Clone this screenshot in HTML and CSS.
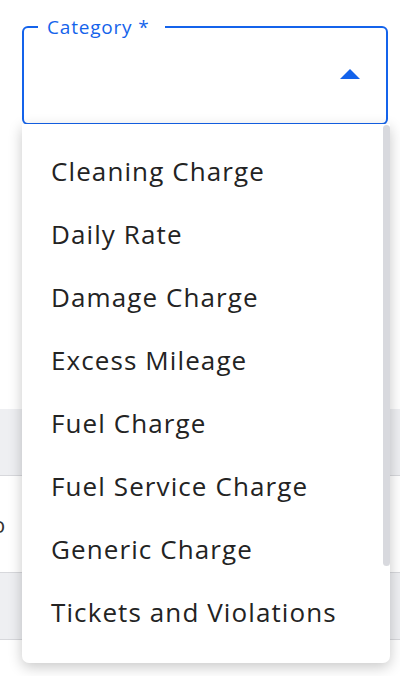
FILE: index.html
```html
<!DOCTYPE html>
<html lang="en">
<head>
    <meta charset="UTF-8">
    <title>Category</title>
    <link rel="stylesheet" href="styles.css">
</head>
<body>
    <div class="page">
        <fieldset class="field">
            <legend>Category *</legend>
            <div class="field-row">
                <svg class="arrow" width="20" height="10" viewBox="0 0 20 10">
                    <path d="M0 10 L10 0 L20 10 Z" fill="#1463eb"/>
                </svg>
            </div>
        </fieldset>

        <div class="table">
            <div class="row head"></div>
            <div class="row body"><span class="cut">o</span></div>
            <div class="row shade"></div>
            <div class="row"></div>
        </div>

        <div class="menu">
            <ul class="list">
                <li>Cleaning Charge</li>
                <li>Daily Rate</li>
                <li>Damage Charge</li>
                <li>Excess Mileage</li>
                <li>Fuel Charge</li>
                <li>Fuel Service Charge</li>
                <li>Generic Charge</li>
                <li>Tickets and Violations</li>
                <li>Tolls</li>
                <li>Weekly Rate</li>
            </ul>
            <div class="thumb"></div>
        </div>
    </div>
</body>
</html>
```

FILE: styles.css
```css
body {
    margin: 0;
    font-family: "Open Sans", sans-serif;
    background-color: #fff;
}

.page {
    position: relative;
    height: 676px;
    overflow: hidden;
    padding-top: 16px;
}

.field {
    margin: 0 12px 0 22px;
    padding: 0;
    border: 2px solid #1463eb;
    border-radius: 6px;
    height: 105px;
    box-sizing: content-box;
}

.field legend {
    margin-left: 14px;
    padding: 0 16px 0 9px;
    font-size: 19px;
    line-height: 22px;
    letter-spacing: 0.8px;
    color: #1463eb;
}

.field-row {
    display: flex;
    justify-content: flex-end;
    padding: 31px 26px 0 0;
}

.arrow {
    display: block;
}

.table {
    margin-top: 284px;
}

.row {
    height: 66px;
    border-bottom: 1px solid #d7d8dc;
}

.row.head,
.row.shade {
    background-color: #eeeff2;
}

.row.body {
    height: 96px;
    display: flex;
    align-items: center;
    background-color: #fff;
}

.cut {
    margin-left: -8px;
    font-size: 22px;
    color: #333;
}

.menu {
    position: absolute;
    top: 124px;
    left: 22px;
    width: 368px;
    height: 539px;
    background: #fff;
    border-radius: 0 0 7px 7px;
    box-shadow: 0 4px 14px rgba(0, 0, 0, 0.22);
    overflow: hidden;
}

.thumb {
    position: absolute;
    top: 1px;
    right: 0;
    width: 7px;
    height: 441px;
    background-color: #d8d9de;
    border-radius: 4px;
}

.list {
    list-style: none;
    margin: 0;
    padding: 16px 0;
}

.list li {
    height: 63px;
    line-height: 63px;
    padding-left: 29px;
    font-size: 26px;
    color: #232323;
    letter-spacing: 1.1px;
}
```
